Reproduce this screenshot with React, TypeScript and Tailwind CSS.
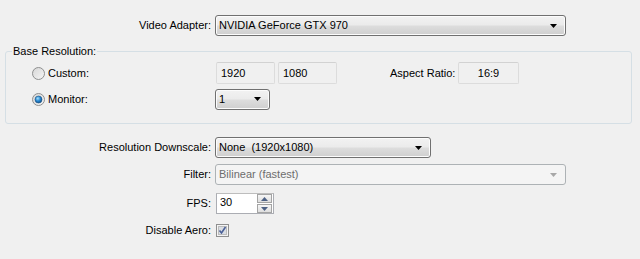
import React from 'react';

const font = "font-['Liberation_Sans',Arial,sans-serif] text-[11px] leading-[13px]";

function Arrow({ disabled }: { disabled?: boolean }) {
  return (
    <svg width="7" height="4" viewBox="0 0 7 4" className="shrink-0">
      <path d="M0 0H7L3.5 4Z" fill={disabled ? '#a7a7a7' : '#000'} />
    </svg>
  );
}

function Combo({ value, width, disabled }: { value: string; width: string; disabled?: boolean }) {
  if (disabled) {
    return (
      <div className={`${width} h-[21px] flex items-center justify-between pl-[3px] pr-[8px] border border-[#adb2b5] rounded-[3px] bg-[#f4f4f4] text-[#6d6d6d]`}>
        <span className="whitespace-pre">{value}</span>
        <Arrow disabled />
      </div>
    );
  }
  return (
    <div className={`${width} h-[21px] flex items-center justify-between pl-[3px] pr-[8px] border border-[#707070] rounded-[3px] shadow-[inset_0_0_0_1px_#fcfcfc] bg-[linear-gradient(to_bottom,#f2f2f2_0%,#ebebeb_48%,#dddddd_52%,#cfcfcf_100%)]`}>
      <span className="whitespace-pre">{value}</span>
      <Arrow />
    </div>
  );
}

function ReadBox({ value, width, center }: { value: string; width: string; center?: boolean }) {
  return (
    <div className={`${width} h-[22px] flex items-center ${center ? 'justify-center' : 'pl-[4px]'} border border-[#dcdcdc] border-t-[#d2d2d2] rounded-[2px] bg-[#f0f0f0]`}>
      {value}
    </div>
  );
}

function Radio({ checked }: { checked?: boolean }) {
  return (
    <svg width="13" height="13" viewBox="0 0 13 13" className="shrink-0">
      <defs>
        <linearGradient id={checked ? 'rb1' : 'rb0'} x1="0" y1="0" x2="1" y2="1">
          <stop offset="0" stopColor="#d6d6d6" />
          <stop offset="1" stopColor="#f6f6f6" />
        </linearGradient>
        <radialGradient id="dot" cx="0.4" cy="0.35" r="0.7">
          <stop offset="0" stopColor="#a6e0fa" />
          <stop offset="0.5" stopColor="#2a8ad4" />
          <stop offset="1" stopColor="#0c4e8a" />
        </radialGradient>
      </defs>
      <circle cx="6.5" cy="6.5" r="6" fill={`url(#${checked ? 'rb1' : 'rb0'})`} stroke="#8e8f8f" strokeWidth="1" />
      {checked && <circle cx="6.5" cy="6.5" r="3.5" fill="url(#dot)" stroke="#1c4f7c" strokeWidth="0.6" />}
    </svg>
  );
}

function Check() {
  return (
    <svg width="13" height="13" viewBox="0 0 13 13" className="shrink-0">
      <rect x="0.5" y="0.5" width="12" height="12" fill="#f4f4f4" stroke="#8f8f8f" />
      <rect x="2.5" y="2.5" width="8" height="8" fill="#d9dde3" stroke="#bcbcbc" />
      <path d="M3.5 6.5L5.5 9L9.5 3" fill="none" stroke="#4a5f97" strokeWidth="1.6" />
    </svg>
  );
}

function SpinBtn({ up }: { up?: boolean }) {
  return (
    <div className="w-[15px] h-[9px] flex items-center justify-center border border-[#a4a4a4] bg-[linear-gradient(to_bottom,#f6f6f6,#dedede)]">
      <svg width="7" height="4" viewBox="0 0 7 4">
        <path d={up ? 'M0 4H7L3.5 0Z' : 'M0 0H7L3.5 4Z'} fill="#4d6185" />
      </svg>
    </div>
  );
}

function Row({ label, children, className = '' }: { label: string; children: React.ReactNode; className?: string }) {
  return (
    <div className={`flex items-center ${className}`}>
      <div className="w-[212px] pr-[1px] text-right shrink-0">{label}</div>
      <div className="ml-[3px] flex items-center">{children}</div>
    </div>
  );
}

export default function App() {
  return (
    <div className={`${font} w-[640px] h-[259px] bg-[#f0f0f0] text-black overflow-hidden`}>
      <Row label="Video Adapter:" className="pt-[15px]">
        <Combo value="NVIDIA GeForce GTX 970" width="w-[351px]" />
      </Row>

      <fieldset className="mt-[9px] ml-[5px] w-[627px] border border-[#d5dfe5] rounded-[3px] pt-[4px] pb-[13px]">
        <legend className="ml-[6px] px-[1px] leading-[13px]">Base Resolution:</legend>
        <div className="pl-[26px]">
          <div className="flex items-center h-[22px]">
            <div className="w-[184px] flex items-center gap-[3px] shrink-0">
              <Radio />
              <span>Custom:</span>
            </div>
            <ReadBox value="1920" width="w-[59px]" />
            <div className="ml-[3px]">
              <ReadBox value="1080" width="w-[59px]" />
            </div>
            <div className="ml-[53px] w-[68px]">Aspect Ratio:</div>
            <ReadBox value="16:9" width="w-[61px]" center />
          </div>
          <div className="flex items-center h-[22px] mt-[4px]">
            <div className="w-[183px] flex items-center gap-[3px] shrink-0">
              <Radio checked />
              <span>Monitor:</span>
            </div>
            <Combo value="1" width="w-[55px]" />
          </div>
        </div>
      </fieldset>

      <Row label="Resolution Downscale:" className="mt-[13px]">
        <Combo value="None  (1920x1080)" width="w-[216px]" />
      </Row>
      <Row label="Filter:" className="mt-[6px]">
        <Combo value="Bilinear (fastest)" width="w-[351px]" disabled />
      </Row>
      <Row label="FPS:" className="mt-[8px]">
        <div className="ml-[1px] w-[58px] h-[21px] flex items-center justify-between pl-[3px] pr-[1px] border border-[#abadb3] border-t-[#bdbdbd] bg-white">
          <span className="-mt-[3px]">30</span>
          <div className="flex flex-col gap-[1px]">
            <SpinBtn up />
            <SpinBtn />
          </div>
        </div>
      </Row>
      <Row label="Disable Aero:" className="mt-[10px]">
        <div className="ml-[1px]">
          <Check />
        </div>
      </Row>
    </div>
  );
}
